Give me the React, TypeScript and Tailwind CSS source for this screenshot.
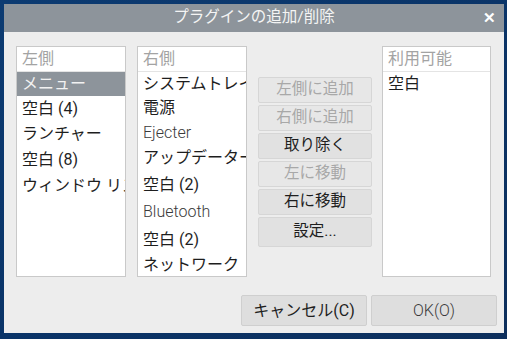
import React from "react";

const font = { fontFamily: 'Roboto, "Noto Sans CJK JP", "Noto Sans", sans-serif' };

type Item = { label: string; h: number; latin?: boolean; selected?: boolean };

const leftItems: Item[] = [
    { label: "メニュー", h: 24, selected: true },
    { label: "空白 (4)", h: 25 },
    { label: "ランチャー", h: 25 },
    { label: "空白 (8)", h: 27 },
    { label: "ウィンドウ リスト", h: 25 },
];

const rightItems: Item[] = [
    { label: "システムトレイ", h: 24 },
    { label: "電源", h: 24 },
    { label: "Ejecter", h: 25, latin: true },
    { label: "アップデーター", h: 26 },
    { label: "空白 (2)", h: 27 },
    { label: "Bluetooth", h: 28, latin: true },
    { label: "空白 (2)", h: 27 },
    { label: "ネットワーク", h: 23 },
];

const ListBox = ({ title, items, width }: { title: string; items: Item[]; width: string }) => (
    <div className={`${width} h-[231px] bg-white border border-[#c9c9c9] overflow-hidden flex flex-col`}>
        <div className="h-[25px] shrink-0 flex items-center px-[5px] border-b border-[#e4e4e4] text-[16px] text-[#a3a3a3]">
            {title}
        </div>
        {items.map((it, i) => (
            <div
                key={i}
                style={{ height: it.h }}
                className={`shrink-0 flex items-center px-[5px] whitespace-nowrap text-[16px] ${
                    it.selected ? "bg-[#8d949b] text-[#f2f2f2]" : it.latin ? "text-[#3a3a3a] font-light" : "text-[#1e1e1e]"
                }`}
            >
                {it.label}
            </div>
        ))}
    </div>
);

const SideButton = ({ label, enabled, h = "h-[26px]" }: { label: string; enabled?: boolean; h?: string }) => (
    <div
        className={`${h} flex items-center justify-center border border-[#d6d6d6] rounded-[2px] text-[15.5px] ${
            enabled ? "bg-[#e1e1e1] text-[#1e1e1e]" : "bg-[#e7e7e7] text-[#a8a8a8]"
        }`}
    >
        {label}
    </div>
);

export default function App() {
    return (
        <div style={font} className="w-[507px] h-[339px] bg-gradient-to-br from-[#0c3b72] via-[#0a3468] to-[#0d2f5c] pt-[4px] pl-[4px] overflow-hidden">
            <div className="w-[500px] h-[329px] bg-[#ededed] flex flex-col">
                {/* title bar */}
                <div className="h-[28px] bg-[#8d949b] relative flex items-center justify-center text-[15.5px] text-[#f4f4f4]">
                    プラグインの追加/削除
                    <span className="absolute right-[8px] top-[3px] text-[15px] font-bold text-white">✕</span>
                </div>

                <div className="flex pt-[14px] pl-[12px]">
                    <ListBox title="左側" items={leftItems} width="w-[110px]" />
                    <div className="w-[11px]" />
                    <ListBox title="右側" items={rightItems} width="w-[110px]" />

                    <div className="w-[114px] ml-[11px] pt-[31px] flex flex-col gap-[2px]">
                        <SideButton label="左側に追加" />
                        <SideButton label="右側に追加" />
                        <SideButton label="取り除く" enabled />
                        <SideButton label="左に移動" />
                        <SideButton label="右に移動" enabled />
                        <SideButton label="設定..." enabled h="h-[30px]" />
                    </div>

                    <div className="ml-[10px]">
                        <ListBox title="利用可能" items={[{ label: "空白", h: 24 }]} width="w-[109px]" />
                    </div>
                </div>

                <div className="flex justify-end gap-[4px] pr-[7px] mt-[18px]">
                    <div className="w-[126px] h-[31px] flex items-center justify-center bg-[#dedede] border border-[#cfcfcf] rounded-[2px] text-[16px] text-[#1e1e1e]">
                        キャンセル(C)
                    </div>
                    <div className="w-[126px] h-[31px] flex items-center justify-center bg-[#dedede] border border-[#cfcfcf] rounded-[2px] text-[16px] text-[#3a3a3a] font-light">
                        OK(O)
                    </div>
                </div>
            </div>
        </div>
    );
}
